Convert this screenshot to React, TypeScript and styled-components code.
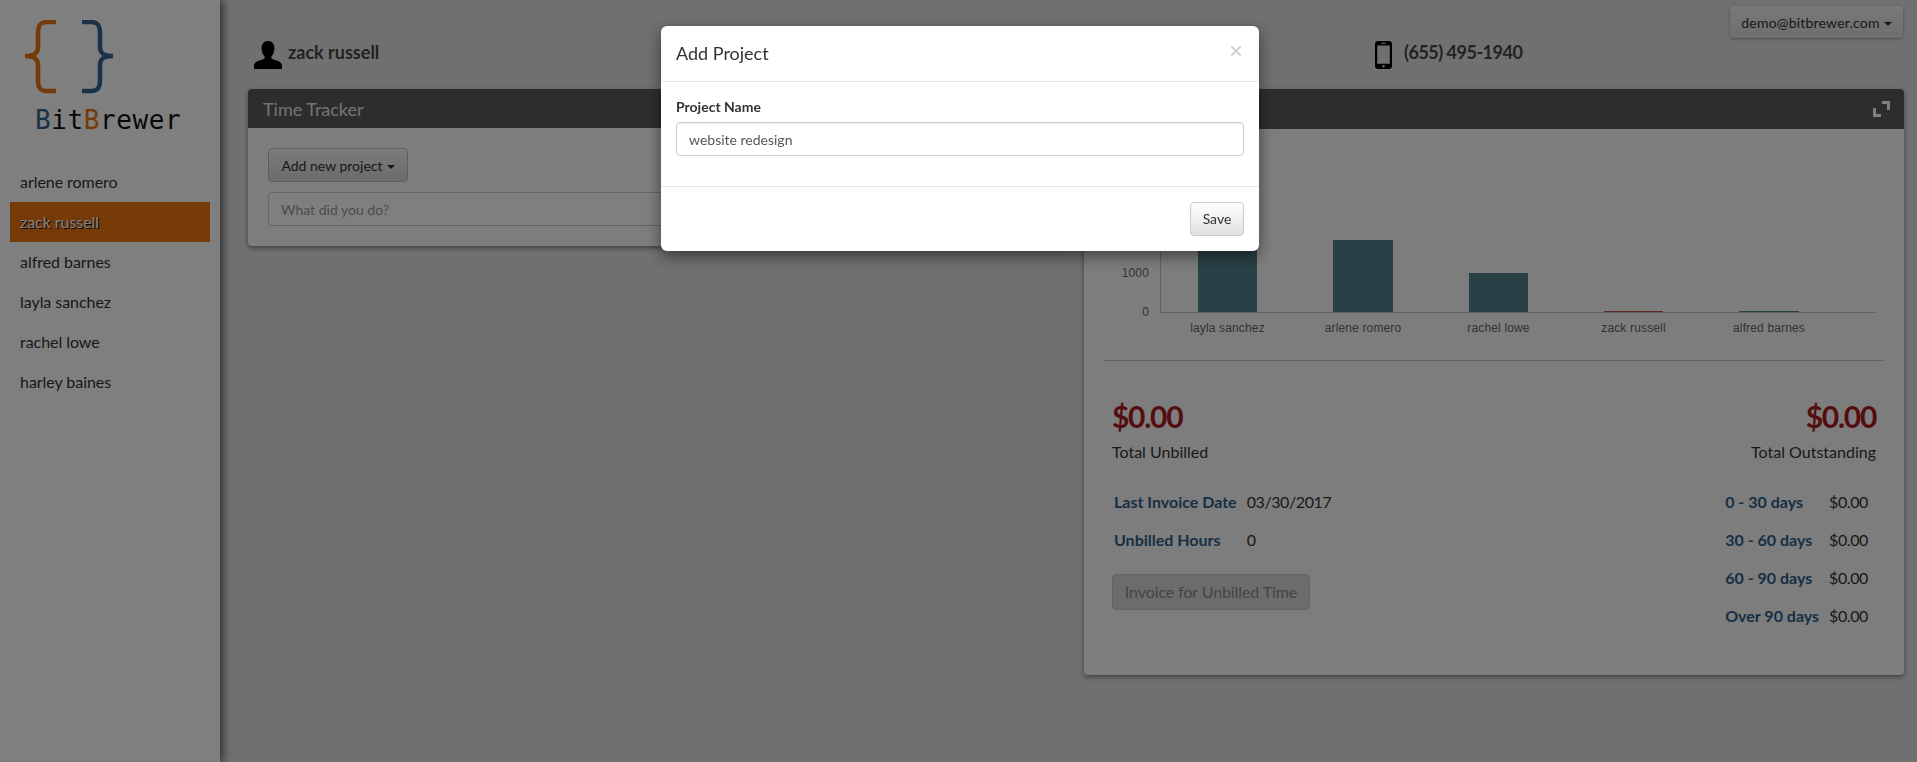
import React from "react";
import styled, { createGlobalStyle } from "styled-components";

const employees = [
  "arlene romero",
  "zack russell",
  "alfred barnes",
  "layla sanchez",
  "rachel lowe",
  "harley baines",
];

const bars = [
  { name: "layla sanchez", x: 38, width: 59, height: 92, color: "#52808c" },
  { name: "arlene romero", x: 173, width: 60, height: 72, color: "#52808c" },
  { name: "rachel lowe", x: 309, width: 59, height: 39, color: "#52808c" },
  { name: "zack russell", x: 444, width: 59, height: 1, color: "#c0504d" },
  { name: "alfred barnes", x: 579, width: 60, height: 1, color: "#52808c" },
];

const aging = [
  { label: "0 - 30 days", value: "$0.00" },
  { label: "30 - 60 days", value: "$0.00" },
  { label: "60 - 90 days", value: "$0.00" },
  { label: "Over 90 days", value: "$0.00" },
];

const GlobalStyle = createGlobalStyle`
  html, body {
    margin: 0;
    padding: 0;
    height: 100%;
    overflow: hidden;
    background: #e1e1e1;
    font-family: "Lato", "Open Sans", sans-serif;
    font-size: 14px;
    color: #333;
  }
  * {
    box-sizing: border-box;
  }
`;

const Page = styled.div`
  display: flex;
  height: 762px;
`;

const Sidebar = styled.aside`
  flex: 0 0 220px;
  background: #fefefe;
  box-shadow: 3px 0 8px rgba(0, 0, 0, 0.6);
  padding: 20px 10px 0;
`;

const Logo = styled.div`
  height: 142px;
  padding-left: 13px;
`;

const LogoText = styled.div`
  font-family: "DejaVu Sans Mono", monospace;
  font-size: 26px;
  line-height: 30px;
  letter-spacing: 0.6px;
  color: #111;
  margin: 11px 0 0 12px;

  .blue {
    color: #35658f;
  }
  .orange {
    color: #e8750e;
  }
`;

const NavList = styled.nav`
  display: flex;
  flex-direction: column;
`;

const NavItem = styled.div<{ $active?: boolean }>`
  height: 40px;
  line-height: 40px;
  padding-left: 10px;
  font-size: 16px;
  letter-spacing: -0.05px;
  color: ${(p) => (p.$active ? "#ffffff" : "#333")};
  background: ${(p) => (p.$active ? "#ea740a" : "transparent")};
  text-shadow: ${(p) => (p.$active ? "1px 1px 0 #111" : "none")};
`;

const Main = styled.main`
  flex: 1;
  min-width: 0;
  padding: 0 13px 0 28px;
`;

const TopRow = styled.header`
  display: grid;
  grid-template-columns: 820px 820px;
  column-gap: 16px;
  height: 89px;
`;

const Contact = styled.div`
  display: flex;
  align-items: flex-start;
  padding: 41px 0 0 6px;
  gap: 6px;
  font-size: 18px;
  font-weight: 700;
  color: #444;
  line-height: 22px;
`;

const PhoneContact = styled(Contact)`
  padding-left: 291px;
  gap: 12px;
  letter-spacing: -0.5px;
`;

const AccountButton = styled.button`
  margin: -35px 1px 0 auto;
  width: 173px;
  height: 32px;
  border: 0;
  border-radius: 4px;
  background: linear-gradient(#f2f2f2, #dcdcdc);
  box-shadow: 0 1px 3px rgba(0, 0, 0, 0.35);
  font: 400 14px "Lato", sans-serif;
  color: #333;
  letter-spacing: 0.2px;
  white-space: nowrap;
`;

const Caret = styled.span`
  display: inline-block;
  width: 0;
  height: 0;
  margin-left: 4px;
  vertical-align: middle;
  border-top: 4px solid currentColor;
  border-left: 4px solid transparent;
  border-right: 4px solid transparent;
`;

const Panels = styled.div`
  display: grid;
  grid-template-columns: 820px 820px;
  column-gap: 16px;
  align-items: start;
`;

const Panel = styled.section`
  background: #fbfbfb;
  border-radius: 4px;
  box-shadow: 0 2px 5px rgba(0, 0, 0, 0.45);
`;

const PanelHead = styled.div<{ $height: number }>`
  display: flex;
  align-items: center;
  justify-content: space-between;
  height: ${(p) => p.$height}px;
  padding: 0 14px 0 15px;
  background: #5b5b5b;
  border-radius: 4px 4px 0 0;
  font-size: 18px;
  color: #e4e4e4;
`;

const TrackerBody = styled.div`
  display: flex;
  flex-direction: column;
  gap: 10px;
  padding: 20px;
  height: 118px;
`;

const AddButton = styled.button`
  width: 140px;
  height: 34px;
  border: 1px solid #bdbdbd;
  border-radius: 4px;
  background: linear-gradient(#f6f6f6, #d8d8d8);
  font: 400 14px "Lato", sans-serif;
  color: #333;
  padding: 0;
`;

const TrackerInput = styled.input`
  width: 100%;
  height: 34px;
  padding: 0 12px;
  border: 1px solid #ccc;
  border-radius: 4px;
  background: #fff;
  font: 400 14px "Lato", sans-serif;

  &::placeholder {
    color: #999;
  }
`;

const SummaryBody = styled.div`
  padding: 0 20px;
  height: 546px;
`;

const ChartSvg = styled.svg`
  display: block;
  margin-left: -20px;
`;

const Rule = styled.hr`
  border: 0;
  border-top: 1px solid #c4c4c4;
  margin: 0;
`;

const TotalsRow = styled.div`
  display: flex;
  justify-content: space-between;
  margin: 36px 8px 0 8px;
`;

const Total = styled.div<{ $right?: boolean }>`
  text-align: ${(p) => (p.$right ? "right" : "left")};
`;

const Amount = styled.div`
  font-size: 30px;
  font-weight: 700;
  letter-spacing: -1.3px;
  line-height: 38px;
  color: #a81c1e;
`;

const AmountLabel = styled.div`
  font-size: 16px;
  line-height: 22px;
  margin-top: 6px;
  color: #333;
`;

const Details = styled.div`
  display: flex;
  justify-content: space-between;
  margin: 20px 14px 0 8px;
`;

const Column = styled.div`
  display: flex;
  flex-direction: column;
`;

const DetailTable = styled.table`
  border-collapse: collapse;
  font-size: 16px;
  line-height: 22px;

  td {
    padding: 8px 2px;
  }
  td:first-child {
    font-weight: 700;
    color: #2f5f8a;
    padding-right: 8px;
  }
  td:last-child {
    color: #333;
    letter-spacing: -0.4px;
  }
`;

const InvoiceButton = styled.button`
  align-self: flex-start;
  width: 198px;
  height: 36px;
  margin-top: 15px;
  border: 1px solid #c4c4c4;
  border-radius: 4px;
  background: #d9d9d9;
  font: 400 16px "Lato", sans-serif;
  letter-spacing: -0.1px;
  color: #888;
  padding: 0 0 2px;
`;

const Overlay = styled.div`
  position: fixed;
  inset: 0;
  background: rgba(0, 0, 0, 0.5);
  display: flex;
  justify-content: center;
  align-items: flex-start;
  padding: 26px 0 0 3px;
`;

const Modal = styled.div`
  width: 598px;
  background: #fff;
  border-radius: 6px;
  box-shadow: 0 5px 15px rgba(0, 0, 0, 0.5);
`;

const ModalHead = styled.div`
  position: relative;
  height: 56px;
  padding: 0 15px 2px;
  display: flex;
  align-items: center;
  border-bottom: 1px solid #e5e5e5;
  font-size: 18px;
  color: #333;
`;

const CloseMark = styled.span`
  position: absolute;
  right: 16px;
  top: 13px;
  font: 400 24px/24px "Liberation Sans", sans-serif;
  color: #ccc;
`;

const ModalBody = styled.div`
  height: 105px;
  padding: 15px;
  border-bottom: 1px solid #e5e5e5;
`;

const FieldLabel = styled.label`
  display: block;
  font-weight: 700;
  font-size: 14px;
  line-height: 20px;
  margin-bottom: 5px;
  color: #333;
`;

const FieldInput = styled.input`
  width: 100%;
  height: 34px;
  padding: 0 12px;
  border: 1px solid #ccc;
  border-radius: 4px;
  box-shadow: inset 0 1px 1px rgba(0, 0, 0, 0.075);
  font: 400 14px "Lato", sans-serif;
  color: #555;
`;

const ModalFoot = styled.div`
  display: flex;
  justify-content: flex-end;
  padding: 15px;
`;

const SaveButton = styled.button`
  width: 54px;
  height: 34px;
  border: 1px solid #ccc;
  border-radius: 4px;
  background: linear-gradient(#fff, #e0e0e0);
  font: 400 14px "Lato", sans-serif;
  color: #333;
  padding: 0 0 2px;
`;

const BraceLogo = () => (
  <svg width="92" height="74" viewBox="0 0 92 74" fill="none" strokeWidth="4.5" style={{ display: "block" }}>
    <path d="M33 2 H24 C16 2 15 7 15 13 V27 C15 33 12 36 2 36 C12 36 15 39 15 45 V59 C15 66 16 71 24 71 H33" stroke="#e8750e" />
    <path d="M59 2 H68 C76 2 77 7 77 13 V27 C77 33 80 36 90 36 C80 36 77 39 77 45 V59 C77 66 76 71 68 71 H59" stroke="#356590" />
  </svg>
);

const PersonIcon = () => (
  <svg width="28" height="28" viewBox="0 0 28 28" fill="#000">
    <path d="M14 0 C9.5 0 7.6 3.4 7.6 7.4 C7.6 11 9 13.6 10.6 15.4 L10.6 17.6 C7 19.6 0 20 0 24.6 V28 H28 V24.6 C28 20 21 19.6 17.4 17.6 L17.4 15.4 C19 13.6 20.4 11 20.4 7.4 C20.4 3.4 18.5 0 14 0 Z" />
  </svg>
);

const PhoneIcon = () => (
  <svg width="17" height="28" viewBox="0 0 17 28">
    <path
      fill="#000"
      fillRule="evenodd"
      d="M3 0 H14 C15.7 0 17 1.3 17 3 V25 C17 26.7 15.7 28 14 28 H3 C1.3 28 0 26.7 0 25 V3 C0 1.3 1.3 0 3 0 Z M2.2 4.5 V22.8 H14.8 V4.5 Z M6.5 1.8 V2.8 H10.5 V1.8 Z M8.5 24 A1.2 1.2 0 1 0 8.5 26.4 A1.2 1.2 0 1 0 8.5 24 Z"
    />
  </svg>
);

const ExpandIcon = () => (
  <svg width="17" height="16" viewBox="0 0 17 16" fill="#fff">
    <path d="M9 0 H17 V9 H14 V3 H9 Z" />
    <path d="M0 7 H3 V13 H8 V16 H0 Z" />
  </svg>
);

const chartFont = { fontFamily: "Liberation Sans, sans-serif", fontSize: 12, letterSpacing: 0.15, fill: "#666" };

const SummaryChart = () => (
  <ChartSvg width="820" height="231" viewBox="0 0 820 231">
    <g transform="translate(76 0)">
      <line x1="0.5" y1="40" x2="0.5" y2="183" stroke="#c4c4c4" />
      <line x1="0" y1="183.5" x2="716" y2="183.5" stroke="#c4c4c4" />
      {bars.map((b) => (
        <rect key={b.name} x={b.x} y={183 - b.height} width={b.width} height={b.height} fill={b.color} />
      ))}
      {bars.map((b) => (
        <text key={b.name} x={b.x + b.width / 2} y="203" textAnchor="middle" {...chartFont}>
          {b.name}
        </text>
      ))}
      <text x="-11" y="148" textAnchor="end" {...chartFont}>
        1000
      </text>
      <text x="-11" y="187" textAnchor="end" {...chartFont}>
        0
      </text>
    </g>
  </ChartSvg>
);

const App = () => {
  return (
    <>
      <GlobalStyle />
      <Page>
        <Sidebar>
          <Logo>
            <BraceLogo />
            <LogoText>
              <span className="blue">B</span>it<span className="orange">B</span>rewer
            </LogoText>
          </Logo>
          <NavList>
            {employees.map((name) => (
              <NavItem key={name} $active={name === "zack russell"}>
                {name}
              </NavItem>
            ))}
          </NavList>
        </Sidebar>
        <Main>
          <TopRow>
            <Contact>
              <PersonIcon />
              zack russell
            </Contact>
            <PhoneContact>
              <PhoneIcon />
              (655) 495-1940
              <AccountButton>
                demo@bitbrewer.com
                <Caret />
              </AccountButton>
            </PhoneContact>
          </TopRow>
          <Panels>
            <Panel>
              <PanelHead $height={39}>Time Tracker</PanelHead>
              <TrackerBody>
                <AddButton>
                  Add new project
                  <Caret />
                </AddButton>
                <TrackerInput placeholder="What did you do?" />
              </TrackerBody>
            </Panel>
            <Panel>
              <PanelHead $height={40}>
                <span />
                <ExpandIcon />
              </PanelHead>
              <SummaryBody>
                <SummaryChart />
                <Rule />
                <TotalsRow>
                  <Total>
                    <Amount>$0.00</Amount>
                    <AmountLabel>Total Unbilled</AmountLabel>
                  </Total>
                  <Total $right>
                    <Amount>$0.00</Amount>
                    <AmountLabel>Total Outstanding</AmountLabel>
                  </Total>
                </TotalsRow>
                <Details>
                  <Column>
                    <DetailTable>
                      <tbody>
                        <tr>
                          <td>Last Invoice Date</td>
                          <td>03/30/2017</td>
                        </tr>
                        <tr>
                          <td>Unbilled Hours</td>
                          <td>0</td>
                        </tr>
                      </tbody>
                    </DetailTable>
                    <InvoiceButton>Invoice for Unbilled Time</InvoiceButton>
                  </Column>
                  <DetailTable>
                    <tbody>
                      {aging.map((row) => (
                        <tr key={row.label}>
                          <td>{row.label}</td>
                          <td>{row.value}</td>
                        </tr>
                      ))}
                    </tbody>
                  </DetailTable>
                </Details>
              </SummaryBody>
            </Panel>
          </Panels>
        </Main>
      </Page>
      <Overlay>
        <Modal>
          <ModalHead>
            Add Project
            <CloseMark>×</CloseMark>
          </ModalHead>
          <ModalBody>
            <FieldLabel>Project Name</FieldLabel>
            <FieldInput defaultValue="website redesign" />
          </ModalBody>
          <ModalFoot>
            <SaveButton>Save</SaveButton>
          </ModalFoot>
        </Modal>
      </Overlay>
    </>
  );
};

export default App;
